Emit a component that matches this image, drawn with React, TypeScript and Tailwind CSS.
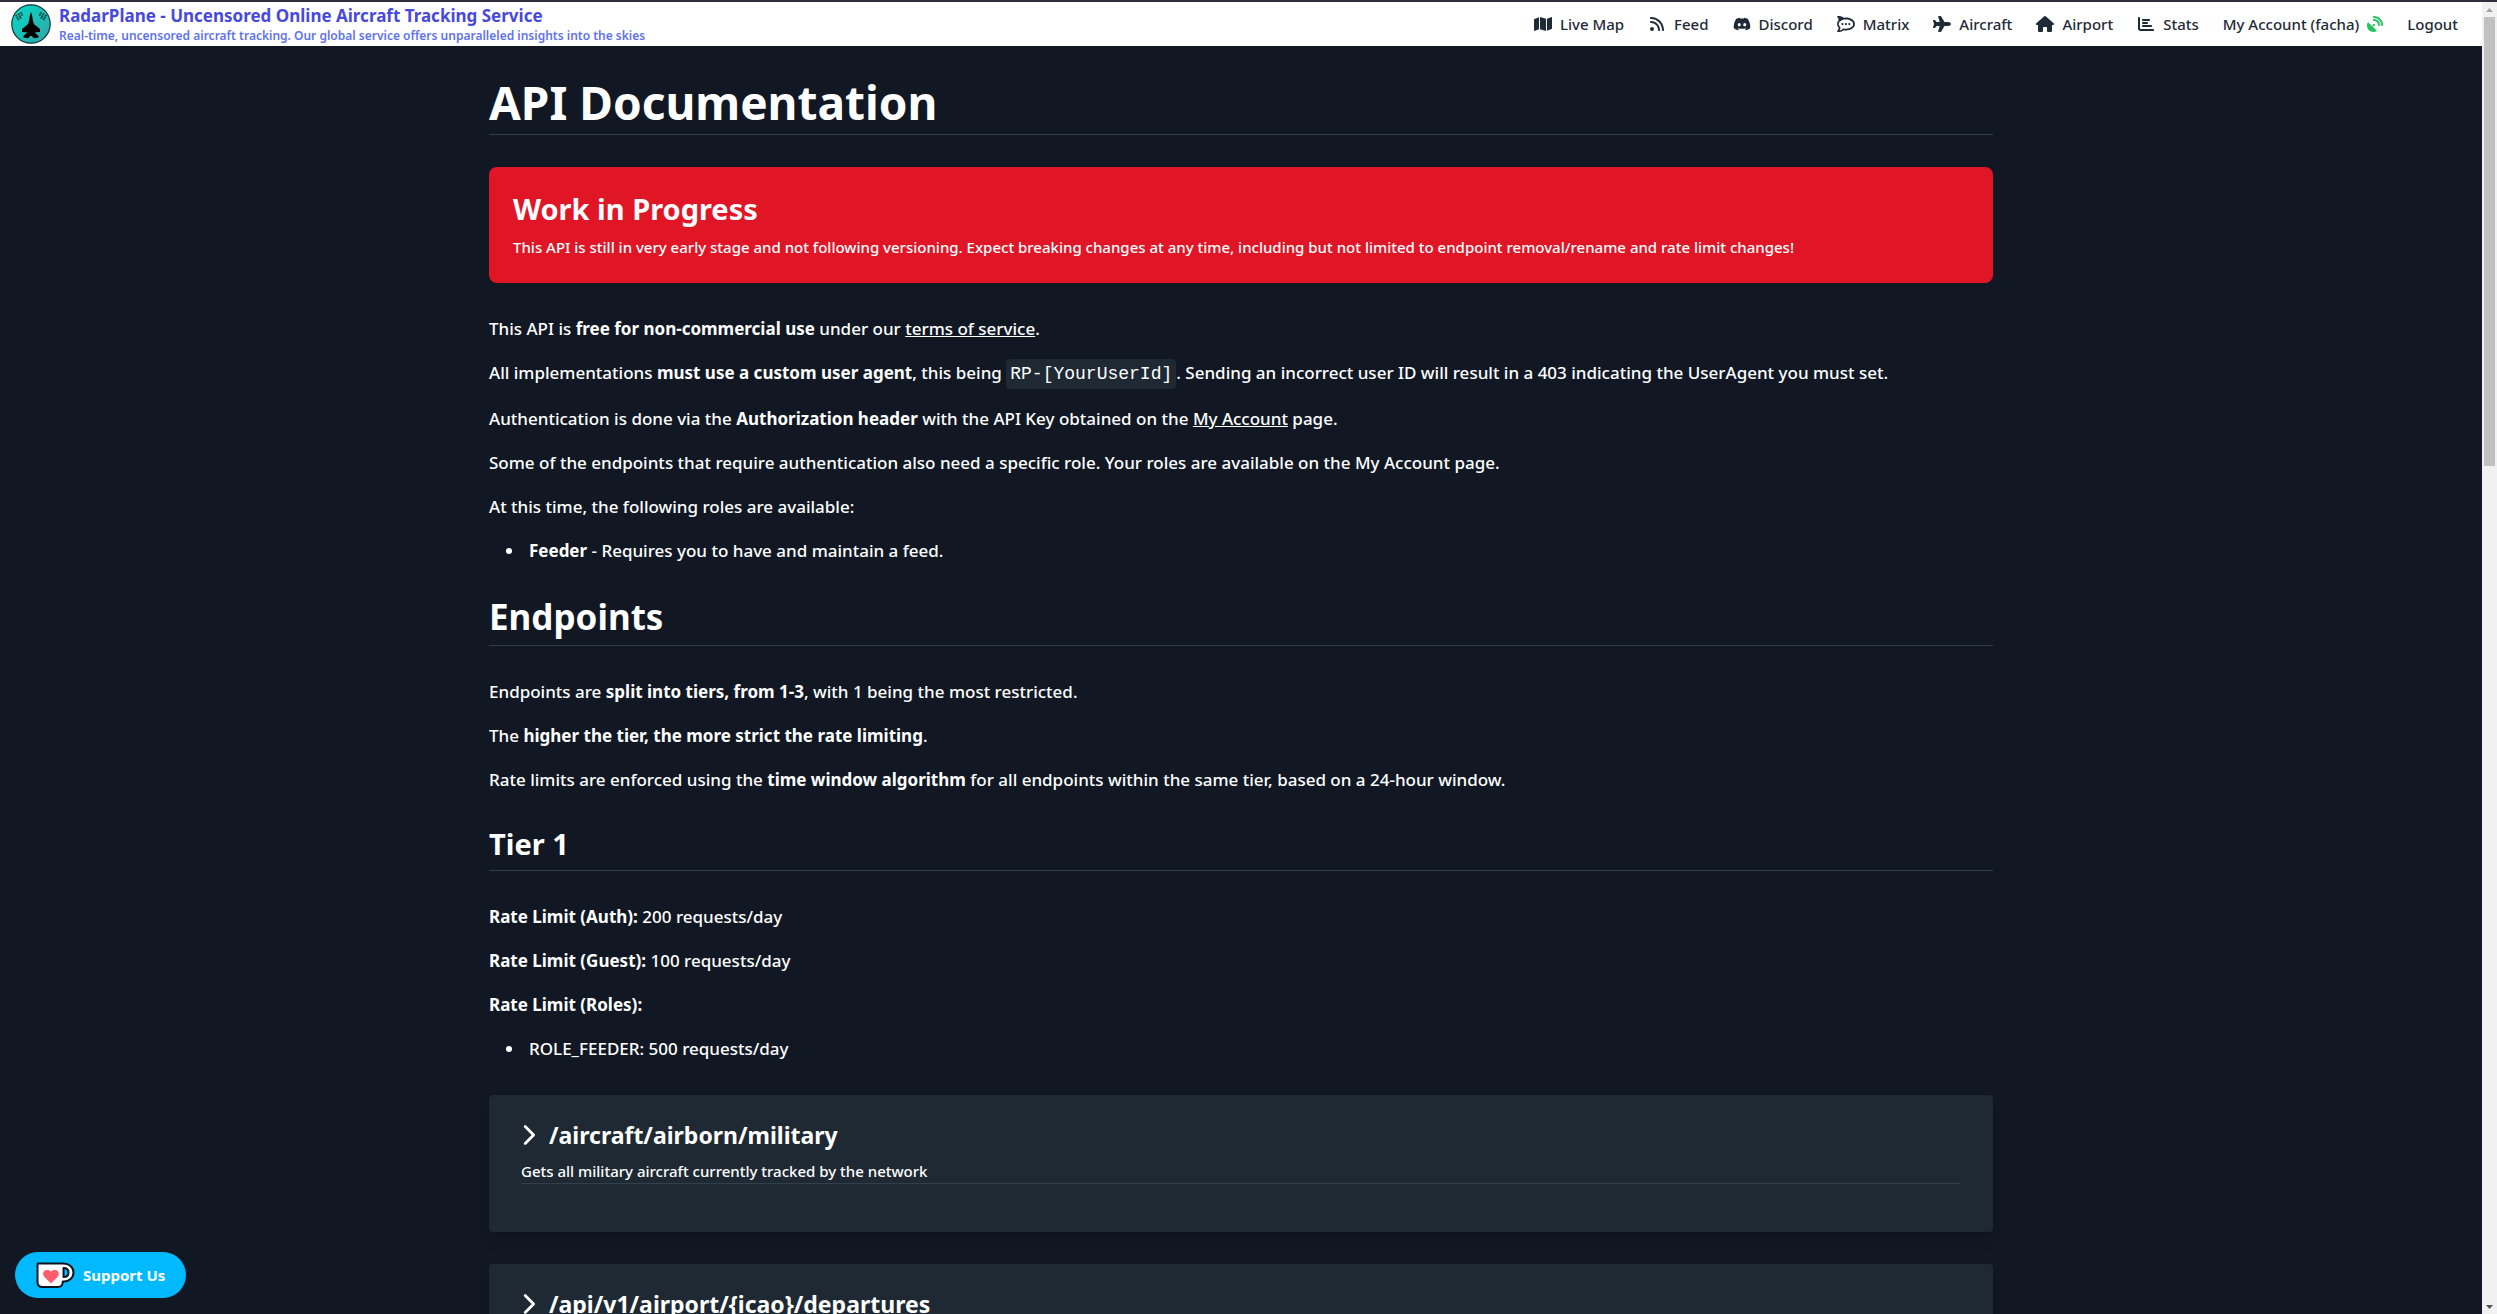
import React from 'react';
import { FaMap, FaRss, FaDiscord, FaRocketchat, FaPlane, FaHouse, FaChartBar, FaSatelliteDish, FaChevronRight } from 'react-icons/fa6';

const navItems = [
  { label: 'Live Map', icon: FaMap },
  { label: 'Feed', icon: FaRss },
  { label: 'Discord', icon: FaDiscord },
  { label: 'Matrix', icon: FaRocketchat },
  { label: 'Aircraft', icon: FaPlane },
  { label: 'Airport', icon: FaHouse },
  { label: 'Stats', icon: FaChartBar },
];

const endpoints = [
  { path: '/aircraft/airborn/military', description: 'Gets all military aircraft currently tracked by the network' },
  { path: '/api/v1/airport/{icao}/departures', description: 'Gets all departures for the given airport' },
];

const Logo = () => (
  <svg viewBox="0 0 40 40" className="size-10 shrink-0" aria-hidden="true">
    <defs>
      <linearGradient id="radar" x1="0" y1="0" x2="1" y2="1">
        <stop offset="0" stopColor="#00dcc8" />
        <stop offset="1" stopColor="#35a5a5" />
      </linearGradient>
    </defs>
    <circle cx="20" cy="20" r="19.2" fill="url(#radar)" stroke="#12343a" strokeWidth="1.2" />
    <path
      fill="#000"
      d="M20 8l1 3 .8 5 1 4 6.2 5v3l-5 .3 1 1.500 2.500 2.200v1.500l-4.500.800L20.800 32h-1.600L17 34.300l-4.500-.800V32l2.500-2.200 1-1.500-5-.3v-3l6.200-5 1-4 .8-5z"
    />
    {/* checkered flags either side of the nose */}
    <g fill="none" stroke="#0b3b3d" strokeWidth="1.6" strokeDasharray="1.800 1">
      <path d="M4.500 12l7-4" />
      <path d="M5.500 14l7-4" />
      <path d="M6.500 16l4-3" />
      <path d="M35.500 12l-7-4" />
      <path d="M34.500 14l-7-4" />
      <path d="M33.500 16l-4-3" />
    </g>
  </svg>
);

const CupIcon = () => (
  <svg viewBox="0 0 39 27" className="h-[27px] w-[39px] shrink-0" aria-hidden="true">
    <path
      d="M2 1.500h25.500c5.500 0 10 3.600 10 9s-4.500 9-9.700 9h-1c0 3.500-1.800 5.500-5 5.500H6.500C3 25 1.500 23 1.500 20V2z"
      fill="#fff"
      stroke="#10161f"
      strokeWidth="2"
      strokeLinejoin="round"
    />
    <path d="M27.500 6c3 0 5 1.800 5 4.500s-2 4.500-5 4.500z" fill="#00b9fe" stroke="#10161f" strokeWidth="2" strokeLinejoin="round" />
    <path d="M15 21.500l-6.500-6.500c-4-4.500 1.500-9.500 6.500-5.300 5-4.200 10.500.8 6.500 5.300z" fill="#ff5e6a" />
  </svg>
);

const Header = () => (
  <header className="flex h-11 shrink-0 items-center justify-between bg-white pl-[11px] pr-6">
    <div className="flex items-center gap-2">
      <Logo />
      <div className="flex flex-col">
        <span className="text-[17px] font-bold leading-6 text-[#4749dd]">RadarPlane - Uncensored Online Aircraft Tracking Service</span>
        <span className="text-xs font-semibold leading-4 text-[#6072ee]">
          Real-time, uncensored aircraft tracking. Our global service offers unparalleled insights into the skies
        </span>
      </div>
    </div>
    <nav className="flex items-center gap-6 text-[15px] font-medium text-[#1f2a37]">
      {navItems.map(({ label, icon: Icon }) => (
        <a key={label} href="#" className="flex items-center gap-2">
          <Icon className="h-4 w-[18px]" />
          {label}
        </a>
      ))}
      <a href="#" className="flex items-center gap-2">
        My Account (facha)
        <FaSatelliteDish className="size-4 text-[#22c55e]" />
      </a>
      <a href="#">Logout</a>
    </nav>
  </header>
);

const Endpoint = ({ path, description }: { path: string; description: string }) => (
  <section className="mb-8 rounded bg-[#1e2933] px-8 pb-12 pt-6 shadow-lg">
    <button type="button" className="flex items-center gap-3.5 text-[23px] font-bold leading-8">
      <FaChevronRight className="h-6 w-3.5" />
      {path}
    </button>
    <p className="mt-2 border-b border-[#32404a] text-[15px] font-medium leading-6">{description}</p>
  </section>
);

const Scrollbar = () => (
  <div className="flex w-[15px] shrink-0 flex-col items-center bg-[#f1f1f1]" aria-hidden="true">
    <svg viewBox="0 0 15 15" className="size-[15px]">
      <path d="M4 10h7L7.500 6z" fill="#a3a3a3" />
    </svg>
    <div className="flex w-full flex-1 flex-col items-center">
      <div className="h-[35%] w-[11px] bg-[#c1c1c1]" />
    </div>
    <svg viewBox="0 0 15 15" className="size-[15px]">
      <path d="M4 6h7l-3.500 4z" fill="#505050" />
    </svg>
  </div>
);

export default function App() {
  return (
    <div className="flex h-screen border-t-2 border-[#302f3e] bg-[#111824] font-['Noto_Sans',sans-serif] text-white">
      <div className="flex min-w-0 flex-1 flex-col overflow-hidden">
        <Header />
        <main className="mx-auto min-h-0 w-full max-w-[1536px] flex-1 px-4 pt-8">
          <h1 className="mb-8 border-b border-[#2f3f4a] pb-2 text-[46px] font-bold leading-12">API Documentation</h1>

          <div className="mb-8 rounded-lg bg-[#e01627] px-6 pb-6 pt-6">
            <h2 className="text-[29px] font-bold leading-9">Work in Progress</h2>
            <p className="mt-2 text-[15px] font-medium leading-6">
              This API is still in very early stage and not following versioning. Expect breaking changes at any time, including but
              not limited to endpoint removal/rename and rate limit changes!
            </p>
          </div>

          <div className="flex flex-col gap-4 text-[17px] font-medium leading-7">
            <p>
              This API is <b className="font-bold">free for non-commercial use</b> under our <a href="#" className="underline">terms of service</a>.
            </p>
            <p>
              All implementations <b className="font-bold">must use a custom user agent</b>, this being{' '}
              <code className="inline-block rounded bg-[#1e2933] p-1 font-['Liberation_Mono',monospace] text-lg leading-[22px]">RP-[YourUserId]</code>.
              Sending an incorrect user ID will result in a 403 indicating the UserAgent you must set.
            </p>
            <p>
              Authentication is done via the <b className="font-bold">Authorization header</b> with the API Key obtained on the{' '}
              <a href="#" className="underline">My Account</a> page.
            </p>
            <p>Some of the endpoints that require authentication also need a specific role. Your roles are available on the My Account page.</p>
            <p>At this time, the following roles are available:</p>
            <ul className="list-disc pl-9">
              <li className="pl-1"><b className="font-bold">Feeder</b> - Requires you to have and maintain a feed.</li>
            </ul>
          </div>

          <h2 className="mb-8 mt-8 border-b border-[#2f3f4a] pb-2 text-[35px] font-bold leading-10">Endpoints</h2>
          <div className="flex flex-col gap-4 text-[17px] font-medium leading-7">
            <p>Endpoints are <b className="font-bold">split into tiers, from 1-3</b>, with 1 being the most restricted.</p>
            <p>The <b className="font-bold">higher the tier, the more strict the rate limiting</b>.</p>
            <p>
              Rate limits are enforced using the <b className="font-bold">time window algorithm</b> for all endpoints within the same tier,
              based on a 24-hour window.
            </p>
          </div>

          <h3 className="mb-8 mt-8 border-b border-[#2f3f4a] pb-2 text-[29px] font-bold leading-9">Tier 1</h3>
          <div className="mb-8 flex flex-col gap-4 text-[17px] font-medium leading-7">
            <p><b className="font-bold">Rate Limit (Auth):</b> 200 requests/day</p>
            <p><b className="font-bold">Rate Limit (Guest):</b> 100 requests/day</p>
            <p><b className="font-bold">Rate Limit (Roles):</b></p>
            <ul className="list-disc pl-9">
              <li className="pl-1">ROLE_FEEDER: 500 requests/day</li>
            </ul>
          </div>

          {endpoints.map((endpoint) => (
            <Endpoint key={endpoint.path} {...endpoint} />
          ))}
        </main>
      </div>
      <Scrollbar />

      <button
        type="button"
        className="fixed bottom-4 left-[15px] flex h-[46px] items-center gap-2 rounded-full bg-[#00b9fe] px-[21px] text-[15px] font-bold"
      >
        <CupIcon />
        Support Us
      </button>
    </div>
  );
}
